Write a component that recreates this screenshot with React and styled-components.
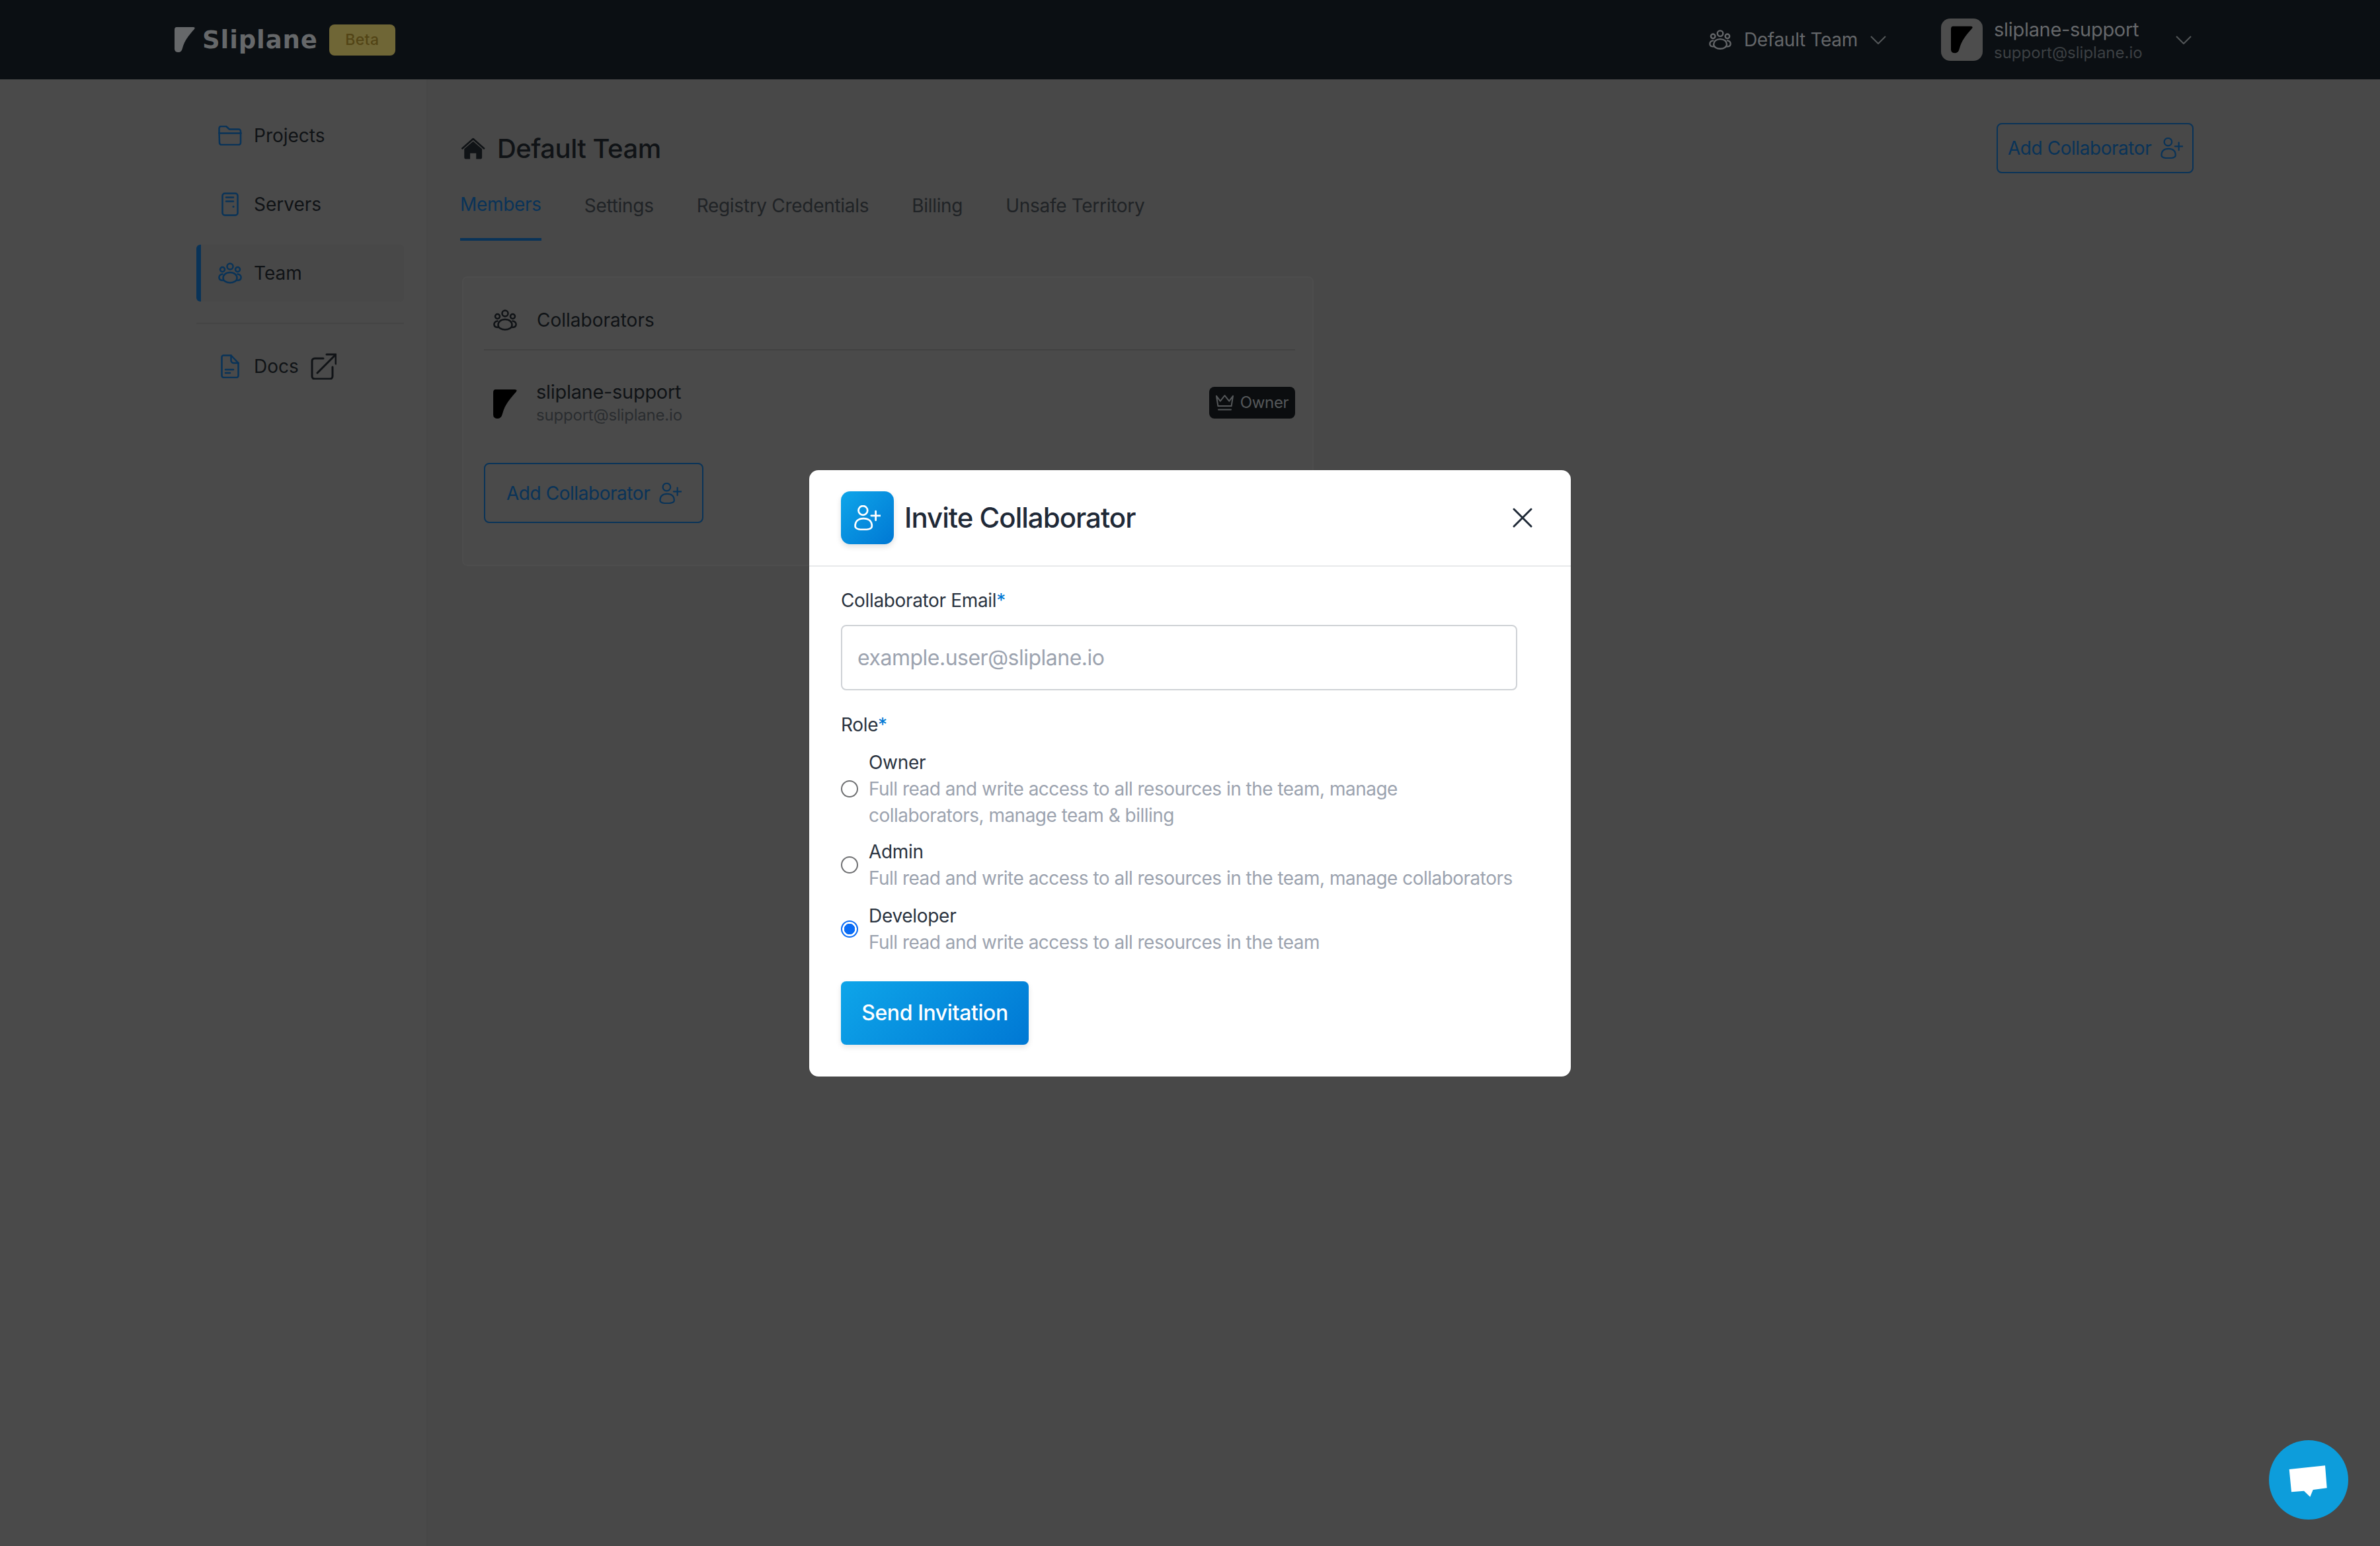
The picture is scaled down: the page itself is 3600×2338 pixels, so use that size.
import React from "react";
import styled, { createGlobalStyle } from "styled-components";

const Global = createGlobalStyle`
  html, body { margin: 0; padding: 0; background: #484848; }
  * { box-sizing: border-box; }
  body { font-family: Inter, "Noto Sans", "Liberation Sans", sans-serif; }
`;

const Page = styled.div`
  width: 3600px;
  height: 2338px;
  overflow: hidden;
  display: flex;
  flex-direction: column;
  background: #484848;
  letter-spacing: -0.3px;
`;

const TopBar = styled.header`
  height: 120px;
  flex: none;
  display: flex;
  align-items: center;
  padding: 0 285px 0 264px;
  background: #0b0f13;
`;

const LogoWord = styled.span`
  margin-left: 11px;
  font-family: "DejaVu Sans", sans-serif;
  font-weight: 700;
  font-size: 37px;
  letter-spacing: 0.9px;
  color: #66686a;
`;

const BetaBadge = styled.span`
  margin-left: 17px;
  width: 100px;
  height: 47px;
  border-radius: 8px;
  background: #6f6636;
  color: #524415;
  font-size: 23px;
  font-weight: 500;
  letter-spacing: 0.4px;
  display: flex;
  align-items: center;
  justify-content: center;
`;

const TopRight = styled.div`
  margin-left: auto;
  display: flex;
  align-items: center;
`;

const TeamSwitch = styled.div`
  display: flex;
  align-items: center;
  gap: 19px;
  color: #65676a;
  font-size: 28px;
`;

const UserBlock = styled.div`
  margin-left: 83px;
  display: flex;
  align-items: center;
`;

const Avatar = styled.div`
  width: 63px;
  height: 64px;
  border-radius: 14px;
  background: #4d4d4d;
  display: flex;
  align-items: center;
  justify-content: center;
`;

const UserText = styled.div`
  margin: 3px 0 0 17px;
  width: 275px;
  display: flex;
  flex-direction: column;
`;

const UserName = styled.span`
  font-size: 29px;
  line-height: 36px;
  color: #65676a;
`;

const UserMail = styled.span`
  font-size: 24px;
  line-height: 34px;
  letter-spacing: 0;
  color: #3c4043;
`;

const Content = styled.div`
  flex: 1;
  display: flex;
  min-height: 0;
`;

const Sidebar = styled.nav`
  width: 647px;
  flex: none;
  padding: 42px 34px 0 297px;
  background: #4a4a4a;
  border-right: 2px solid #474747;
  display: flex;
  flex-direction: column;
`;

const NavItem = styled.a`
  height: 86px;
  margin-bottom: ${(p) => p.$gap ?? 18}px;
  display: flex;
  align-items: center;
  padding-left: ${(p) => (p.$active ? 26 : 33)}px;
  gap: 18px;
  font-size: 28px;
  letter-spacing: 0;
  color: #101316;
  border-radius: 6px;
  background: ${(p) => (p.$active ? "#484848" : "transparent")};
  border-left: ${(p) => (p.$active ? "7px solid #093358" : "none")};
`;

const NavIcon = styled.span`
  width: 36px;
  display: flex;
  justify-content: center;
  color: #093358;
`;

const NavDivider = styled.hr`
  margin: 32px 0 21px;
  border: 0;
  height: 2px;
  background: #444444;
`;

const ExtLink = styled.span`
  display: flex;
  margin-left: -1px;
  color: #101316;
`;

const Main = styled.main`
  flex: 1;
  padding: 66px 282px 0 49px;
`;

const TitleRow = styled.div`
  display: flex;
  align-items: center;
  justify-content: space-between;
  height: 76px;
`;

const Title = styled.h1`
  margin: 0;
  display: flex;
  align-items: center;
  gap: 18px;
  padding-left: 2px;
  font-size: 40px;
  font-weight: 500;
  letter-spacing: -0.5px;
  color: #101316;
`;

const OutlineButton = styled.button`
  font-family: inherit;
  letter-spacing: -0.45px;
  height: ${(p) => p.$h}px;
  width: ${(p) => p.$w}px;
  padding: 0 0 0 ${(p) => p.$pad}px;
  display: flex;
  align-items: center;
  gap: 14px;
  background: transparent;
  border: 2px solid #093358;
  border-radius: 8px;
  color: #093358;
  font-size: 28px;
`;

const Tabs = styled.div`
  display: flex;
  gap: 65px;
  margin-top: 18px;
`;

const Tab = styled.a`
  height: 84px;
  padding-top: ${(p) => (p.$active ? 12 : 14)}px;
  line-height: 34px;
  font-size: 28px;
  letter-spacing: -0.3px;
  color: ${(p) => (p.$active ? "#093358" : "#202326")};
  border-bottom: 4px solid ${(p) => (p.$active ? "#093358" : "transparent")};
`;

const Card = styled.section`
  width: 1288px;
  margin: 54px 0 0 3px;
  padding: 0 26px 63px 31px;
  background: #4a4a4a;
  border: 2px solid #4d4d4d;
  border-radius: 8px;
`;

const CardHead = styled.div`
  height: 110px;
  padding: 20px 0 0 14px;
  display: flex;
  align-items: center;
  gap: 30px;
  font-size: 28px;
  letter-spacing: 0;
  color: #101316;
  border-bottom: 2px solid #424242;
`;

const MemberRow = styled.div`
  margin-top: 45px;
  height: 71px;
  padding-left: 14px;
  display: flex;
  align-items: center;
  gap: 29px;
`;

const MemberText = styled.div`
  flex: 1;
  display: flex;
  flex-direction: column;
`;

const MemberName = styled.span`
  font-size: 29px;
  line-height: 35px;
  color: #101316;
`;

const MemberMail = styled.span`
  font-size: 24px;
  line-height: 36px;
  letter-spacing: -0.2px;
  color: #2a2d30;
`;

const OwnerBadge = styled.span`
  margin-top: -4px;
  width: 130px;
  height: 48px;
  border-radius: 8px;
  background: #0b0d0f;
  color: #55585a;
  font-size: 24px;
  display: flex;
  align-items: center;
  justify-content: center;
  gap: 10px;
`;

const AddRow = styled.div`
  margin-top: 54px;
`;

const Backdrop = styled.div`
  position: fixed;
  inset: 0;
  display: flex;
  align-items: center;
  justify-content: center;
`;

const Modal = styled.div`
  width: 1152px;
  background: #fff;
  border-radius: 14px;
`;

const ModalHead = styled.div`
  height: 146px;
  padding: 0 58px 0 48px;
  display: flex;
  align-items: center;
  border-bottom: 2px solid #e8e9eb;
`;

const ModalBadge = styled.div`
  width: 80px;
  height: 80px;
  border-radius: 14px;
  background: linear-gradient(135deg, #0ea5e9, #0078d4);
  box-shadow: 0 4px 8px rgba(0, 0, 0, 0.12);
  display: flex;
  align-items: center;
  justify-content: center;
  color: #fff;
`;

const ModalTitle = styled.h2`
  margin: 0 0 0 16px;
  flex: 1;
  font-size: 42px;
  font-weight: 500;
  letter-spacing: -1px;
  color: #1f2937;
`;

const CloseIcon = styled.svg`
  display: block;
  color: #1f2937;
`;

const ModalBody = styled.form`
  padding: 34px 48px 48px;
`;

const FieldLabel = styled.label`
  display: block;
  font-size: 28px;
  line-height: 34px;
  letter-spacing: -0.35px;
  color: #2a3340;
  margin-top: ${(p) => p.$top ?? 0}px;
`;

const Star = styled.span`
  color: #0078d4;
`;

const EmailInput = styled.input`
  display: block;
  width: 1023px;
  height: 99px;
  margin-top: 20px;
  padding: 0 23px;
  border: 2px solid #cfd2d6;
  border-radius: 8px;
  font-family: inherit;
  font-size: 32px;
  letter-spacing: -0.5px;
  outline: none;
  &::placeholder { color: #9ca3af; }
`;

const RoleList = styled.div`
  margin-top: 20px;
  display: flex;
  flex-direction: column;
  gap: 15px;
`;

const RoleOption = styled.label`
  display: flex;
  align-items: center;
  gap: 16px;
  margin-top: ${(p) => p.$top ?? 0}px;
`;

const RoleRadio = styled.input`
  flex: none;
  appearance: none;
  width: 26px;
  height: 26px;
  margin: 0;
  border-radius: 50%;
  border: 2px solid #6f7072;
  background: #fff;
  &:checked {
    border: 2.5px solid #0a6cf5;
    background: radial-gradient(circle, #0a6cf5 0 8px, #fff 8.5px);
  }
`;

const RoleText = styled.span`
  display: flex;
  flex-direction: column;
  font-size: 28px;
  line-height: 40px;
  letter-spacing: -0.52px;
`;

const RoleName = styled.span`
  color: #2a3340;
  letter-spacing: -0.3px;
`;

const RoleDesc = styled.span`
  color: #9ca3af;
`;

const SendButton = styled.button`
  display: block;
  margin-top: 39px;
  width: 284px;
  height: 96px;
  border: 0;
  border-radius: 8px;
  background: linear-gradient(135deg, #0ea5e9, #0078d4);
  box-shadow: 0 4px 8px rgba(0, 0, 0, 0.1);
  color: #fff;
  font-family: inherit;
  font-size: 32px;
  font-weight: 500;
  letter-spacing: -0.4px;
`;

const ChatBubble = styled.div`
  position: fixed;
  right: 48px;
  bottom: 40px;
  width: 120px;
  height: 120px;
  border-radius: 50%;
  background: #0d9ddb;
`;

const Icon = ({ w, h, vb, sw = 2.5, children }) => (
  <svg width={w} height={h} viewBox={vb} fill="none" stroke="currentColor" strokeWidth={sw} strokeLinecap="round" strokeLinejoin="round" style={{ display: "block", flex: "none" }}>
    {children}
  </svg>
);

const LogoMark = ({ color, w = 31, h = 38 }) => (
  <svg width={w} height={h} viewBox="0 0 31 38" style={{ display: "block", flex: "none" }}>
    <path fill={color} d="M3 0H28Q32 0 30 3C22 12 15 20 12 32Q10.5 38 6 38Q0 38 0 33V4Q0 0 3 0Z" />
  </svg>
);

const FolderIcon = () => (
  <Icon w={36} h={30} vb="0 0 36 30">
    <path d="M1.5 10V4a3 3 0 0 1 3-3h7.5l5 4.5h14a3 3 0 0 1 3 3V26a3 3 0 0 1-3 3h-26a3 3 0 0 1-3-3z" />
    <path d="M1.5 11.5h33" />
  </Icon>
);

const ServerIcon = () => (
  <Icon w={26} h={36} vb="0 0 26 36">
    <rect x="1.5" y="1.5" width="23" height="33" rx="3.5" />
    <path d="M7 7.5h11M7 13.5h11" />
    <path d="M18 21.5h.01" strokeWidth="3" />
  </Icon>
);

const TeamIcon = ({ w = 36, h = 32 }) => (
  <Icon w={w} h={h} vb="0 0 36 32">
    <circle cx="18" cy="6" r="4.5" />
    <circle cx="6.5" cy="10.5" r="3.5" />
    <circle cx="29.5" cy="10.5" r="3.5" />
    <path d="M18 15c6.5 0 10.5 4 10.5 8.5S23.5 30.5 18 30.5 7.5 28 7.5 23.5 11.5 15 18 15z" />
    <path d="M6.5 17.5C3 18 1 20.5 1.5 23.5c.4 2.2 2.5 3.5 5.5 3.5" />
    <path d="M29.5 17.5c3.5.5 5.5 3 5 6-.4 2.2-2.5 3.5-5.5 3.5" />
  </Icon>
);

const DocIcon = () => (
  <Icon w={28} h={36} vb="0 0 28 36">
    <path d="M4 1.5h11.5L26.5 13v19a3 3 0 0 1-3 3H4.5a3 3 0 0 1-3-3V4A2.5 2.5 0 0 1 4 1.5z" />
    <path d="M15.5 1.5V9a4 4 0 0 0 4 4h7" />
    <path d="M7 23h12M7 28h7" />
  </Icon>
);

const ExternalIcon = () => (
  <Icon w={40} h={40} vb="0 0 40 40" sw={3}>
    <path d="M20 8H7a4 4 0 0 0-4 4v23a4 4 0 0 0 4 4h23a4 4 0 0 0 4-4V21" />
    <path d="M11 30L38 3" />
    <path d="M25 2h14v14" />
  </Icon>
);

const UserPlusIcon = ({ w = 34, h = 32, sw = 2.5 }) => (
  <Icon w={w} h={h} vb="0 0 38 36" sw={sw}>
    <circle cx="12.7" cy="7.5" r="6.5" />
    <path d="M1.5 30C1.5 23 6 19 13.5 19S25.5 23 25.5 30c0 3.5-5.5 5-12 5s-12-1.5-12-5z" />
    <path d="M31 8.5v13M24.5 15h13" />
  </Icon>
);

const HouseIcon = () => (
  <svg width="36" height="33" viewBox="0 0 110 100" style={{ display: "block", flex: "none" }}>
    <path d="M4 50L54 6l50 44" fill="none" stroke="#101316" strokeWidth="8" strokeLinecap="round" strokeLinejoin="round" />
    <path fill="#101316" d="M13 52L54 17l41 35v40q0 7-7 7H68V72H40v27H20q-7 0-7-7z" />
  </svg>
);

const CrownIcon = () => (
  <Icon w={27} h={24} vb="0 0 80 70" sw={6}>
    <path d="M3 5L20 28 40 3 60 28 77 5 70 50H10z" />
    <path d="M12 66h56" />
  </Icon>
);

const ChevronIcon = ({ color }) => (
  <svg width="24" height="13" viewBox="0 0 24 13" fill="none" stroke={color} strokeWidth="2" style={{ display: "block", flex: "none" }}>
    <path d="M1 1l11 11L23 1" />
  </svg>
);

const roles = [
  { name: "Owner", desc: ["Full read and write access to all resources in the team, manage", "collaborators, manage team & billing"] },
  { name: "Admin", desc: ["Full read and write access to all resources in the team, manage collaborators"] },
  { name: "Developer", desc: ["Full read and write access to all resources in the team"], checked: true, top: 2 },
];

export default function App() {
  return (
    <Page>
      <Global />
      <TopBar>
        <LogoMark color="#66686a" />
        <LogoWord>Sliplane</LogoWord>
        <BetaBadge>Beta</BetaBadge>
        <TopRight>
          <TeamSwitch>
            <TeamIcon w={34} h={32} />
            <span>Default Team</span>
            <ChevronIcon color="#55585a" />
          </TeamSwitch>
          <UserBlock>
            <Avatar>
              <LogoMark color="#000" w={33} h={46} />
            </Avatar>
            <UserText>
              <UserName>sliplane-support</UserName>
              <UserMail>support@sliplane.io</UserMail>
            </UserText>
            <ChevronIcon color="#55585a" />
          </UserBlock>
        </TopRight>
      </TopBar>

      <Content>
        <Sidebar>
          <NavItem>
            <NavIcon><FolderIcon /></NavIcon>
            Projects
          </NavItem>
          <NavItem>
            <NavIcon><ServerIcon /></NavIcon>
            Servers
          </NavItem>
          <NavItem $active $gap={0}>
            <NavIcon><TeamIcon /></NavIcon>
            Team
          </NavItem>
          <NavDivider />
          <NavItem>
            <NavIcon><DocIcon /></NavIcon>
            Docs
            <ExtLink><ExternalIcon /></ExtLink>
          </NavItem>
        </Sidebar>

        <Main>
          <TitleRow>
            <Title><HouseIcon />Default Team</Title>
            <OutlineButton $w={298} $h={76} $pad={15}>
              Add Collaborator
              <UserPlusIcon />
            </OutlineButton>
          </TitleRow>
          <Tabs>
            <Tab $active>Members</Tab>
            <Tab>Settings</Tab>
            <Tab>Registry Credentials</Tab>
            <Tab>Billing</Tab>
            <Tab>Unsafe Territory</Tab>
          </Tabs>
          <Card>
            <CardHead>
              <TeamIcon />
              Collaborators
            </CardHead>
            <MemberRow>
              <LogoMark color="#000" w={36} h={44} />
              <MemberText>
                <MemberName>sliplane-support</MemberName>
                <MemberMail>support@sliplane.io</MemberMail>
              </MemberText>
              <OwnerBadge><CrownIcon />Owner</OwnerBadge>
            </MemberRow>
            <AddRow>
              <OutlineButton $w={332} $h={91} $pad={32}>
                Add Collaborator
                <UserPlusIcon />
              </OutlineButton>
            </AddRow>
          </Card>
        </Main>
      </Content>

      <Backdrop>
        <Modal>
          <ModalHead>
            <ModalBadge><UserPlusIcon w={40} h={38} sw={2.6} /></ModalBadge>
            <ModalTitle>Invite Collaborator</ModalTitle>
            <CloseIcon width="30" height="30" viewBox="0 0 30 30" fill="none" stroke="currentColor" strokeWidth="3" strokeLinecap="round">
              <path d="M2 2l26 26M28 2L2 28" />
            </CloseIcon>
          </ModalHead>
          <ModalBody>
            <FieldLabel>Collaborator Email<Star>*</Star></FieldLabel>
            <EmailInput placeholder="example.user@sliplane.io" />
            <FieldLabel $top={35}>Role<Star>*</Star></FieldLabel>
            <RoleList>
              {roles.map((r) => (
                <RoleOption key={r.name} $top={r.top}>
                  <RoleRadio type="radio" name="role" defaultChecked={r.checked} />
                  <RoleText>
                    <RoleName>{r.name}</RoleName>
                    {r.desc.map((d) => <RoleDesc key={d}>{d}</RoleDesc>)}
                  </RoleText>
                </RoleOption>
              ))}
            </RoleList>
            <SendButton type="button">Send Invitation</SendButton>
          </ModalBody>
        </Modal>
      </Backdrop>

      <ChatBubble>
        <svg width="120" height="120" viewBox="0 0 120 120" style={{ display: "block" }}>
          <polygon fill="#fff" points="30.7,44 85,38.3 87.7,72.3 66.7,75 62.3,85.7 53,76.7 34,78.3" />
        </svg>
      </ChatBubble>
    </Page>
  );
}
